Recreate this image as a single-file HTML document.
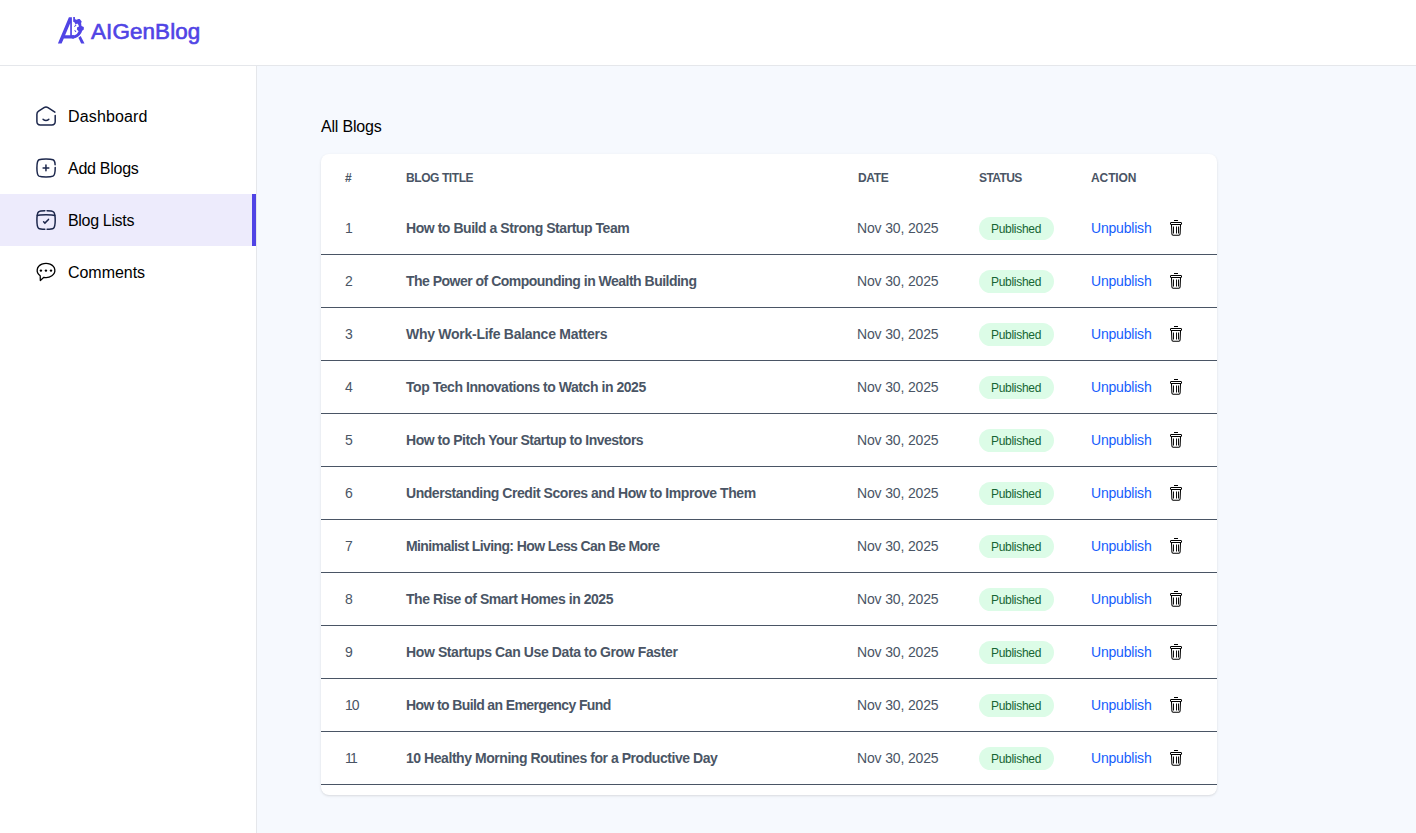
<!DOCTYPE html>
<html><head><meta charset="utf-8"><title>AIGenBlog</title>
<style>
*{box-sizing:border-box;margin:0;padding:0}
html,body{width:1416px;height:833px;overflow:hidden;background:#fff;font-family:"Liberation Sans",sans-serif;}
.hdr{position:absolute;left:0;top:0;width:1416px;height:66px;border-bottom:1px solid #E5E7EB;background:#fff}
.logo{position:absolute;left:54px;top:12px}
.brand{position:absolute;left:91px;top:17px;font-size:21.5px;line-height:30px;font-weight:400;color:#5044E5;letter-spacing:0.1px;-webkit-text-stroke:0.6px #5044E5;transform:scaleX(1.043);transform-origin:0 0}
.side{position:absolute;left:0;top:66px;width:257px;height:767px;border-right:1px solid #E5E7EB;background:#fff}
.nav{position:absolute;left:0;width:256px;height:52px;line-height:52px;font-size:16px;color:#000}
.nav span{position:absolute;left:68px;top:1px;letter-spacing:0.15px}
.nav svg{position:absolute;left:32px;top:12px}
.nav.act{background:#EDEBFC;border-right:4px solid #5044E5}
.main{position:absolute;left:257px;top:66px;width:1159px;height:767px;background:#F6F9FE}
.h1{position:absolute;left:321px;top:115px;font-size:16px;line-height:24px;color:#000;letter-spacing:-0.2px}
.card{position:absolute;left:321px;top:154px;width:896px;height:641px;background:#fff;border-radius:8px;box-shadow:0 1px 3px 0 rgba(0,0,0,.1),0 1px 2px -1px rgba(0,0,0,.1);overflow:hidden}
.th{position:absolute;top:0;height:48px;line-height:48px;font-size:12px;font-weight:700;color:#4A5565;text-transform:uppercase;letter-spacing:-0.35px}
.row{position:absolute;left:0;width:896px;height:53px;border-bottom:1px solid #4A5565;font-size:14px;line-height:52px}
.row span{position:absolute;top:0;white-space:nowrap}
.num{left:24px;color:#4A5565}
.ttl{left:85px;color:#4A5565;font-weight:700;letter-spacing:-0.45px}
.dt{left:536px;color:#4A5565;letter-spacing:-0.15px}
.badge{left:658px;top:15px!important;height:23px;line-height:24px;padding:0 13px 0 12px;border-radius:12px;background:#DCFCE7;color:#166534;font-size:12px;letter-spacing:-0.3px}
.unp{left:770px;color:#155DFC;letter-spacing:-0.2px}
.trash{position:absolute;left:843px;top:12px}
</style></head><body>
<div class="hdr">
<svg class="logo" width="36" height="36" viewBox="0 0 36 36" fill="#5044E5">
<path fill-rule="evenodd" d="M3.9 31.6L14.9 5.2H17.9V23.2H20V26.4H9.8L7.6 31.6Z M11.1 23.2L16.2 11.2V23.2Z"/>
<path d="M19.2 5H20.9V6.4Q21.3 7.5 22.5 7.8L24.4 7.1H25.7L27.7 9.6L27.1 11.3Q27.3 12.6 27.5 13.9L29.8 15V17.6L28.2 18.7Q26.9 23.6 21.5 25.9L19.5 26.4H17.9V23.2H20.6Q23.6 22 24.6 19.2L22.9 17.6L23.2 15.2L25 14.6Q24.6 12.5 23.2 11.4L21.6 12.6L20.4 10.3Q19.8 9.9 19.2 9.8Z"/>
<path d="M20 14.4L21.8 12.6L22.5 13.2L20.6 15Z M20.2 18.6L21 18L22.4 19.6L21.6 20.3Z"/>
<path d="M24.4 25.8L26.7 24L30.5 31.6H27.2Z"/>
</svg>
<div class="brand">AIGenBlog</div>
</div>
<div class="side">
<div class="nav" style="top:24px"><svg width="28" height="28" viewBox="0 0 28 28" fill="none" stroke="#1C274C" stroke-width="1.5" stroke-linecap="round"><path d="M22.9 10.2L16 5.6Q14 4.3 12 5.6L6.6 9.1Q4.9 10.2 4.9 12.2V19.5Q4.9 22.9 8.3 22.9H19.8Q23.2 22.9 23.2 19.5V13.4"/><path d="M11.1 17.3Q14 19.5 16.8 17.3"/></svg><span>Dashboard</span></div>
<div class="nav" style="top:76px"><svg width="28" height="28" viewBox="0 0 28 28" fill="none" stroke="#1C274C" stroke-width="1.5" stroke-linecap="round"><path d="M23.1 10.8Q23 6.6 21 5.8Q19 5 14 5Q9 5 7 5.8Q4.9 6.8 4.9 14Q4.9 21.2 7 22.1Q9 22.9 14 22.9Q19 22.9 21 22.1Q23.2 21.2 23.2 14V13.4"/><path d="M11.1 13.95H16.8M13.95 11.1V16.8"/></svg><span style="letter-spacing:-0.26px">Add Blogs</span></div>
<div class="nav act" style="top:128px"><svg width="28" height="28" viewBox="0 0 28 28" fill="none" stroke="#1C274C" stroke-width="1.5" stroke-linecap="round"><path d="M12.8 4.7Q8 4.8 6.6 5.8Q4.9 7 4.9 14Q4.9 21.2 6.6 22.3Q8 23.2 12.8 23.2M15.1 4.7Q20 4.8 21.4 5.8Q23.2 7 23.2 14Q23.2 21.2 21.4 22.3Q20 23.2 15.1 23.2"/><path d="M5.3 9.5Q7 8.7 14 8.7Q21 8.7 22.8 9.5"/><path d="M11.6 15.8L12.9 17.1L16.5 13.4"/></svg><span style="letter-spacing:-0.33px">Blog Lists</span></div>
<div class="nav" style="top:180px"><svg width="28" height="28" viewBox="0 0 28 28" fill="none" stroke="#000" stroke-width="1.3" stroke-linejoin="round"><path d="M8.2 17.81L8.35 22.5L11.9 19.35A8.85 7.1 0 1 0 8.2 17.81Z"/><circle cx="8.9" cy="12.6" r="1.2" fill="#000" stroke="none"/><circle cx="13.95" cy="12.6" r="1.2" fill="#000" stroke="none"/><circle cx="19" cy="12.6" r="1.2" fill="#000" stroke="none"/></svg><span style="letter-spacing:-0.04px">Comments</span></div>
</div>
<div class="main"></div>
<div class="h1">All Blogs</div>
<div class="card">
<div class="th" style="left:24px">#</div>
<div class="th" style="left:85px;letter-spacing:-0.42px">Blog Title</div>
<div class="th" style="left:537px">Date</div>
<div class="th" style="left:658px;letter-spacing:-0.6px">Status</div>
<div class="th" style="left:770px;letter-spacing:-0.1px">Action</div>
<div class="row" style="top:48px"><span class="num">1</span><span class="ttl">How to Build a Strong Startup Team</span><span class="dt">Nov 30, 2025</span><span class="badge">Published</span><span class="unp">Unpublish</span><svg class="trash" width="24" height="28" viewBox="0 0 24 28"><g fill="none" stroke="#000" stroke-width="1"><rect x="10" y="6" width="4" height="1" fill="#000" stroke="none"/><rect x="6.5" y="8.5" width="11" height="2" rx="0.3"/><path d="M7.5 11L7.9 20Q8 21.2 9.2 21.2H14.8Q16 21.2 16.1 20L16.5 11" stroke-width="1.05"/><path d="M9.5 12.5V19.5M12.5 12.5V19.5M14.5 12.5V19.5" stroke-width="0.95"/></g></svg></div>
<div class="row" style="top:101px"><span class="num">2</span><span class="ttl" style="letter-spacing:-0.51px">The Power of Compounding in Wealth Building</span><span class="dt">Nov 30, 2025</span><span class="badge">Published</span><span class="unp">Unpublish</span><svg class="trash" width="24" height="28" viewBox="0 0 24 28"><g fill="none" stroke="#000" stroke-width="1"><rect x="10" y="6" width="4" height="1" fill="#000" stroke="none"/><rect x="6.5" y="8.5" width="11" height="2" rx="0.3"/><path d="M7.5 11L7.9 20Q8 21.2 9.2 21.2H14.8Q16 21.2 16.1 20L16.5 11" stroke-width="1.05"/><path d="M9.5 12.5V19.5M12.5 12.5V19.5M14.5 12.5V19.5" stroke-width="0.95"/></g></svg></div>
<div class="row" style="top:154px"><span class="num">3</span><span class="ttl" style="letter-spacing:-0.27px">Why Work-Life Balance Matters</span><span class="dt">Nov 30, 2025</span><span class="badge">Published</span><span class="unp">Unpublish</span><svg class="trash" width="24" height="28" viewBox="0 0 24 28"><g fill="none" stroke="#000" stroke-width="1"><rect x="10" y="6" width="4" height="1" fill="#000" stroke="none"/><rect x="6.5" y="8.5" width="11" height="2" rx="0.3"/><path d="M7.5 11L7.9 20Q8 21.2 9.2 21.2H14.8Q16 21.2 16.1 20L16.5 11" stroke-width="1.05"/><path d="M9.5 12.5V19.5M12.5 12.5V19.5M14.5 12.5V19.5" stroke-width="0.95"/></g></svg></div>
<div class="row" style="top:207px"><span class="num">4</span><span class="ttl">Top Tech Innovations to Watch in 2025</span><span class="dt">Nov 30, 2025</span><span class="badge">Published</span><span class="unp">Unpublish</span><svg class="trash" width="24" height="28" viewBox="0 0 24 28"><g fill="none" stroke="#000" stroke-width="1"><rect x="10" y="6" width="4" height="1" fill="#000" stroke="none"/><rect x="6.5" y="8.5" width="11" height="2" rx="0.3"/><path d="M7.5 11L7.9 20Q8 21.2 9.2 21.2H14.8Q16 21.2 16.1 20L16.5 11" stroke-width="1.05"/><path d="M9.5 12.5V19.5M12.5 12.5V19.5M14.5 12.5V19.5" stroke-width="0.95"/></g></svg></div>
<div class="row" style="top:260px"><span class="num">5</span><span class="ttl" style="letter-spacing:-0.48px">How to Pitch Your Startup to Investors</span><span class="dt">Nov 30, 2025</span><span class="badge">Published</span><span class="unp">Unpublish</span><svg class="trash" width="24" height="28" viewBox="0 0 24 28"><g fill="none" stroke="#000" stroke-width="1"><rect x="10" y="6" width="4" height="1" fill="#000" stroke="none"/><rect x="6.5" y="8.5" width="11" height="2" rx="0.3"/><path d="M7.5 11L7.9 20Q8 21.2 9.2 21.2H14.8Q16 21.2 16.1 20L16.5 11" stroke-width="1.05"/><path d="M9.5 12.5V19.5M12.5 12.5V19.5M14.5 12.5V19.5" stroke-width="0.95"/></g></svg></div>
<div class="row" style="top:313px"><span class="num">6</span><span class="ttl">Understanding Credit Scores and How to Improve Them</span><span class="dt">Nov 30, 2025</span><span class="badge">Published</span><span class="unp">Unpublish</span><svg class="trash" width="24" height="28" viewBox="0 0 24 28"><g fill="none" stroke="#000" stroke-width="1"><rect x="10" y="6" width="4" height="1" fill="#000" stroke="none"/><rect x="6.5" y="8.5" width="11" height="2" rx="0.3"/><path d="M7.5 11L7.9 20Q8 21.2 9.2 21.2H14.8Q16 21.2 16.1 20L16.5 11" stroke-width="1.05"/><path d="M9.5 12.5V19.5M12.5 12.5V19.5M14.5 12.5V19.5" stroke-width="0.95"/></g></svg></div>
<div class="row" style="top:366px"><span class="num">7</span><span class="ttl" style="letter-spacing:-0.6px">Minimalist Living: How Less Can Be More</span><span class="dt">Nov 30, 2025</span><span class="badge">Published</span><span class="unp">Unpublish</span><svg class="trash" width="24" height="28" viewBox="0 0 24 28"><g fill="none" stroke="#000" stroke-width="1"><rect x="10" y="6" width="4" height="1" fill="#000" stroke="none"/><rect x="6.5" y="8.5" width="11" height="2" rx="0.3"/><path d="M7.5 11L7.9 20Q8 21.2 9.2 21.2H14.8Q16 21.2 16.1 20L16.5 11" stroke-width="1.05"/><path d="M9.5 12.5V19.5M12.5 12.5V19.5M14.5 12.5V19.5" stroke-width="0.95"/></g></svg></div>
<div class="row" style="top:419px"><span class="num">8</span><span class="ttl">The Rise of Smart Homes in 2025</span><span class="dt">Nov 30, 2025</span><span class="badge">Published</span><span class="unp">Unpublish</span><svg class="trash" width="24" height="28" viewBox="0 0 24 28"><g fill="none" stroke="#000" stroke-width="1"><rect x="10" y="6" width="4" height="1" fill="#000" stroke="none"/><rect x="6.5" y="8.5" width="11" height="2" rx="0.3"/><path d="M7.5 11L7.9 20Q8 21.2 9.2 21.2H14.8Q16 21.2 16.1 20L16.5 11" stroke-width="1.05"/><path d="M9.5 12.5V19.5M12.5 12.5V19.5M14.5 12.5V19.5" stroke-width="0.95"/></g></svg></div>
<div class="row" style="top:472px"><span class="num">9</span><span class="ttl" style="letter-spacing:-0.39px">How Startups Can Use Data to Grow Faster</span><span class="dt">Nov 30, 2025</span><span class="badge">Published</span><span class="unp">Unpublish</span><svg class="trash" width="24" height="28" viewBox="0 0 24 28"><g fill="none" stroke="#000" stroke-width="1"><rect x="10" y="6" width="4" height="1" fill="#000" stroke="none"/><rect x="6.5" y="8.5" width="11" height="2" rx="0.3"/><path d="M7.5 11L7.9 20Q8 21.2 9.2 21.2H14.8Q16 21.2 16.1 20L16.5 11" stroke-width="1.05"/><path d="M9.5 12.5V19.5M12.5 12.5V19.5M14.5 12.5V19.5" stroke-width="0.95"/></g></svg></div>
<div class="row" style="top:525px"><span class="num" style="letter-spacing:-1px">10</span><span class="ttl" style="letter-spacing:-0.62px">How to Build an Emergency Fund</span><span class="dt">Nov 30, 2025</span><span class="badge">Published</span><span class="unp">Unpublish</span><svg class="trash" width="24" height="28" viewBox="0 0 24 28"><g fill="none" stroke="#000" stroke-width="1"><rect x="10" y="6" width="4" height="1" fill="#000" stroke="none"/><rect x="6.5" y="8.5" width="11" height="2" rx="0.3"/><path d="M7.5 11L7.9 20Q8 21.2 9.2 21.2H14.8Q16 21.2 16.1 20L16.5 11" stroke-width="1.05"/><path d="M9.5 12.5V19.5M12.5 12.5V19.5M14.5 12.5V19.5" stroke-width="0.95"/></g></svg></div>
<div class="row" style="top:578px"><span class="num" style="letter-spacing:-1.8px">11</span><span class="ttl">10 Healthy Morning Routines for a Productive Day</span><span class="dt">Nov 30, 2025</span><span class="badge">Published</span><span class="unp">Unpublish</span><svg class="trash" width="24" height="28" viewBox="0 0 24 28"><g fill="none" stroke="#000" stroke-width="1"><rect x="10" y="6" width="4" height="1" fill="#000" stroke="none"/><rect x="6.5" y="8.5" width="11" height="2" rx="0.3"/><path d="M7.5 11L7.9 20Q8 21.2 9.2 21.2H14.8Q16 21.2 16.1 20L16.5 11" stroke-width="1.05"/><path d="M9.5 12.5V19.5M12.5 12.5V19.5M14.5 12.5V19.5" stroke-width="0.95"/></g></svg></div>
</div>
</body></html>
